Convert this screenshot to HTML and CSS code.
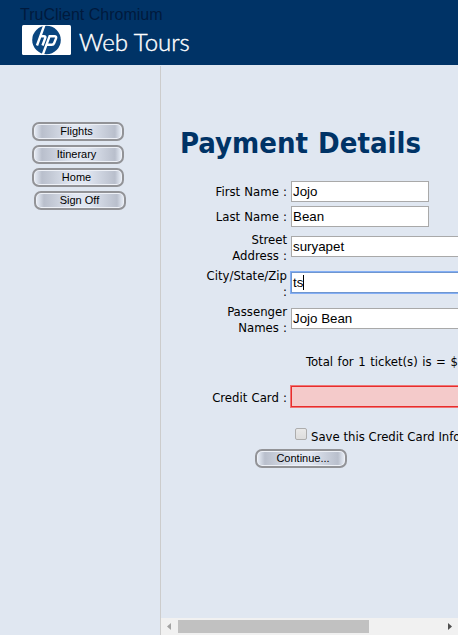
FILE: index.html
```html
<!DOCTYPE html>
<html lang="en">
<head>
<meta charset="utf-8">
<title>Web Tours</title>
<link rel="stylesheet" href="styles.css">
</head>
<body>
<header class="header">
  <div class="client">TruClient Chromium</div>
  <div class="brand">
    <svg class="logo" width="49" height="30" viewBox="0 0 49 30">
      <rect width="49" height="30" rx="1.5" fill="#fff"/>
      <circle cx="24.5" cy="15" r="14.3" fill="#0a4680"/>
      <g fill="none" stroke="#fff" stroke-width="2.4">
        <path d="M22.6 -.5L15 20.5M18.4 11.2h3.5q2 0 1.3 2L20.5 20.5"/>
        <path d="M20.5 30.5L27.6 11.2H32.4q2.3 0 1.6 2.2L32.2 18q-.6 1.8-2.5 1.8h-5"/>
      </g>
    </svg>
    <span class="brand-name">Web Tours</span>
  </div>
</header>
<div class="body">
  <nav class="side">
    <a class="pill">Flights</a>
    <a class="pill">Itinerary</a>
    <a class="pill">Home</a>
    <a class="pill pill-last">Sign Off</a>
  </nav>
  <main class="main">
    <h1 class="title">Payment Details</h1>
    <form class="form">
      <div class="row"><label class="label">First Name :</label><div class="field short">Jojo</div></div>
      <div class="row"><label class="label">Last Name :</label><div class="field short">Bean</div></div>
      <div class="row tall"><label class="label two">Street<br>Address :</label><div class="field">suryapet</div></div>
      <div class="row tall"><label class="label two">City/State/Zip<br>:</label><div class="field focus">ts<span class="caret"></span></div></div>
      <div class="row tall"><label class="label two">Passenger<br>Names :</label><div class="field">Jojo Bean</div></div>
      <div class="total">Total for 1 ticket(s) is = $</div>
      <div class="row card"><label class="label">Credit Card :</label><div class="field error"></div></div>
      <div class="save"><span class="check"></span><span>Save this Credit Card Info</span></div>
      <a class="pill continue">Continue...</a>
    </form>
    <div class="scroll">
      <svg class="arrow" width="17" height="17" viewBox="0 0 17 17"><path d="M10 5v7L6 8.5z" fill="#a3a3a3"/></svg>
      <div class="track"><div class="thumb"></div></div>
      <svg class="arrow" width="17" height="17" viewBox="0 0 17 17"><path d="M7 5v7l4-3.5z" fill="#505050"/></svg>
    </div>
  </main>
</div>
</body>
</html>
```
FILE: styles.css
```css
* { box-sizing: border-box; }
body {
  margin: 0;
  width: 458px;
  height: 635px;
  overflow: hidden;
  background: #e0e7f1;
  color: #000;
  font-family: "DejaVu Sans Condensed", "DejaVu Sans", sans-serif;
  font-stretch: condensed;
  font-size: 13px;
  white-space: nowrap;
}
.header { position: relative; height: 65px; padding: 25px 0 0 22px; background: #003366; }
.client {
  position: absolute;
  left: 20px;
  top: 5px;
  font: 16px/19px "Liberation Sans", sans-serif;
  color: #001a3d;
}
.brand { display: flex; gap: 8px; height: 30px; }
.brand-name { font: 300 24px/34px Lato, sans-serif; color: #fff; -webkit-text-stroke: .4px #fff; }
.body { display: flex; height: 570px; }
.side {
  width: 161px;
  flex: none;
  margin-top: 1px;
  padding: 56px 0 0 32px;
  border-right: 1px solid #cccccc;
}
.pill {
  display: block;
  width: 92px;
  height: 19px;
  margin-bottom: 4px;
  border: 2px solid #929397;
  border-radius: 7px;
  box-shadow: inset 0 0 0 1px #eef1f7;
  background: linear-gradient(90deg, #e0e6f0 2%, #b9bfcc 9%, #c5cbd7 20%, #e0e6f1 43%, #e0e6f1 60%, #b9bfcc 92%, #e0e6f0 98%);
  font: 11px/15px "Liberation Sans", sans-serif;
  text-align: center;
  padding-right: 3px;
}
.pill-last { margin-left: 2px; padding-right: 1px; }
.main { flex: 1; min-width: 0; overflow: hidden; display: flex; flex-direction: column; }
.title {
  margin: 59px 0 0 19px;
  height: 55px;
  font-size: 29px;
  line-height: 38px;
  font-weight: bold;
  color: #003366;
  word-spacing: 1px;
}
.form { flex: 1; }
.row { display: flex; align-items: center; height: 25px; gap: 4px; width: 700px; }
.tall { height: 36px; }
.tall .field { margin-bottom: 2px; }
.label { width: 126px; line-height: 16px; text-align: right; word-spacing: .5px; }
.two { padding-top: 2px; }
.field {
  display: flex;
  align-items: center;
  width: 350px;
  height: 21px;
  padding-left: 1px;
  border: 1px solid #a9a9a9;
  background: #fff;
  font: 13.33px/17px "Liberation Sans", sans-serif;
}
.short { width: 138px; }
.focus { border-color: #6f96cf; box-shadow: 0 0 0 1px #83aef5; }
.caret { width: 1px; height: 15px; background: #000; }
.total { height: 49px; padding: 17px 0 0 145px; line-height: 16px; word-spacing: .8px; }
.card { height: 24px; }
.card .field { margin-bottom: 3px; }
.error { border-color: #e92c2c; box-shadow: 0 0 0 1px #ec7777; background: #f4caca; }
.save { display: flex; gap: 4px; padding: 18px 0 0 134px; line-height: 18px; }
.check { flex: none; width: 12px; height: 12px; border: 1px solid #adadad; border-radius: 2px; background: linear-gradient(#e9e9e9, #dddddd); }
.continue { margin: 3px 0 0 94px; padding: 0 0 0 4px; }
.scroll { display: flex; height: 17px; background: #f1f1f1; }
.track { flex: 1; padding: 2px 0 2px; }
.thumb { width: 191px; height: 13px; background: #c1c1c1; }
```
